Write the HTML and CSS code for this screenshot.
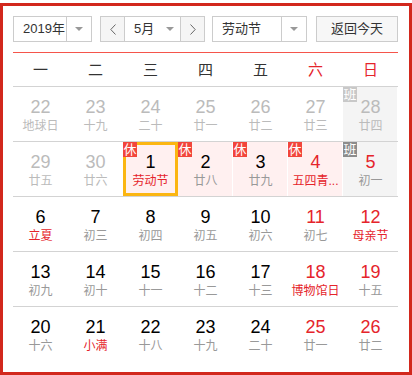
FILE: index.html
```html
<!DOCTYPE html>
<html>
<head>
  <meta charset="UTF-8">
  <title>万年历</title>
  <link rel="stylesheet" href="styles.css">
</head>
<body>
  <div class="calendar">
    <div class="toolbar">
      <div class="select year-select">
        <span class="select-text">2019年</span>
        <span class="select-arrow"></span>
      </div>
      <div class="month-group">
        <span class="nav-btn">
          <svg width="6" height="11" viewBox="0 0 6 11"><path d="M5.5 0.5 L0.8 5.5 L5.5 10.5" fill="none" stroke="#666" stroke-width="1"/></svg>
        </span>
        <div class="month-select">
          <span class="select-text">5月</span>
          <span class="arrow"></span>
        </div>
        <span class="nav-btn">
          <svg width="6" height="11" viewBox="0 0 6 11"><path d="M0.5 0.5 L5.2 5.5 L0.5 10.5" fill="none" stroke="#666" stroke-width="1"/></svg>
        </span>
      </div>
      <div class="select holiday-select">
        <span class="select-text">劳动节</span>
        <span class="select-arrow"></span>
      </div>
      <span class="today-btn">返回今天</span>
    </div>

    <div class="weekdays">
      <span>一</span><span>二</span><span>三</span><span>四</span><span>五</span>
      <span class="weekend">六</span><span class="weekend">日</span>
    </div>

    <div class="week">
      <div class="day other"><b>22</b><i>地球日</i></div>
      <div class="day other"><b>23</b><i>十九</i></div>
      <div class="day other"><b>24</b><i>二十</i></div>
      <div class="day other"><b>25</b><i>廿一</i></div>
      <div class="day other"><b>26</b><i>廿二</i></div>
      <div class="day other"><b>27</b><i>廿三</i></div>
      <div class="day other work"><span class="tag tag-work-light">班</span><b>28</b><i>廿四</i></div>
    </div>
    <div class="week">
      <div class="day other"><b>29</b><i>廿五</i></div>
      <div class="day other"><b>30</b><i>廿六</i></div>
      <div class="day rest selected"><span class="tag">休</span><b>1</b><i class="fest">劳动节</i></div>
      <div class="day rest"><span class="tag">休</span><b>2</b><i>廿八</i></div>
      <div class="day rest"><span class="tag">休</span><b>3</b><i>廿九</i></div>
      <div class="day rest red"><span class="tag">休</span><b>4</b><i class="fest">五四青...</i></div>
      <div class="day work red"><span class="tag tag-work">班</span><b>5</b><i>初一</i></div>
    </div>
    <div class="week">
      <div class="day"><b>6</b><i class="fest">立夏</i></div>
      <div class="day"><b>7</b><i>初三</i></div>
      <div class="day"><b>8</b><i>初四</i></div>
      <div class="day"><b>9</b><i>初五</i></div>
      <div class="day"><b>10</b><i>初六</i></div>
      <div class="day red"><b>11</b><i>初七</i></div>
      <div class="day red"><b>12</b><i class="fest">母亲节</i></div>
    </div>
    <div class="week">
      <div class="day"><b>13</b><i>初九</i></div>
      <div class="day"><b>14</b><i>初十</i></div>
      <div class="day"><b>15</b><i>十一</i></div>
      <div class="day"><b>16</b><i>十二</i></div>
      <div class="day"><b>17</b><i>十三</i></div>
      <div class="day red"><b>18</b><i class="fest">博物馆日</i></div>
      <div class="day red"><b>19</b><i>十五</i></div>
    </div>
    <div class="week">
      <div class="day"><b>20</b><i>十六</i></div>
      <div class="day"><b>21</b><i class="fest">小满</i></div>
      <div class="day"><b>22</b><i>十八</i></div>
      <div class="day"><b>23</b><i>十九</i></div>
      <div class="day"><b>24</b><i>二十</i></div>
      <div class="day red"><b>25</b><i>廿一</i></div>
      <div class="day red"><b>26</b><i>廿二</i></div>
    </div>
  </div>
</body>
</html>
```

FILE: styles.css
```css
body {
  margin: 0;
  padding-top: 3px;
  font-family: "Liberation Sans", "Noto Sans CJK SC", sans-serif;
  color: #333;
}

.calendar {
  width: 412px;
  height: 372px;
  box-sizing: border-box;
  border: 3px solid #d2281d;
  padding: 10px 11px 0 10px;
}

/* 顶部工具栏 */
.toolbar {
  display: flex;
  height: 26px;
  margin-bottom: 10px;
  font-size: 13px;
}

.select {
  display: flex;
  box-sizing: border-box;
  height: 26px;
  border: 1px solid #ccc;
  background: #fff;
}

.select-text {
  flex: 1;
  min-width: 0;
  line-height: 24px;
  padding-left: 9px;
  white-space: nowrap;
}

.select-arrow {
  width: 24px;
  flex: none;
  border-left: 1px solid #ccc;
  position: relative;
}

.select-arrow::after,
.arrow::after {
  content: "";
  position: absolute;
  left: 50%;
  top: 50%;
  margin: -2px 0 0 -4px;
  border-left: 4px solid transparent;
  border-right: 4px solid transparent;
  border-top: 4px solid #999;
}

.year-select {
  width: 79px;
}

.holiday-select {
  width: 95px;
  margin-left: 7px;
}

.month-group {
  display: flex;
  width: 105px;
  height: 26px;
  box-sizing: border-box;
  margin-left: 8px;
  border: 1px solid #ccc;
}

.nav-btn {
  width: 23px;
  display: flex;
  align-items: center;
  justify-content: center;
  background: #f5f5f5;
}

.month-select {
  flex: 1;
  display: flex;
  background: #fff;
  border-left: 1px solid #ccc;
  border-right: 1px solid #ccc;
}

.month-select .arrow {
  width: 20px;
  position: relative;
}

.today-btn {
  width: 82px;
  height: 26px;
  box-sizing: border-box;
  margin-left: 9px;
  border: 1px solid #ccc;
  background: #f7f7f7;
  text-align: center;
  line-height: 24px;
}

/* 星期 */
.weekdays {
  display: grid;
  grid-template-columns: repeat(7, 55px);
  height: 33px;
  border-top: 1px solid #f5554b;
  border-bottom: 1px solid #d3d3d3;
  font-size: 15px;
  line-height: 33px;
  text-align: center;
}

.weekdays .weekend {
  color: #e5242b;
}

/* 日期 */
.week {
  display: grid;
  grid-template-columns: repeat(7, 55px);
  border-bottom: 1px solid #d3d3d3;
}

.week:last-child {
  border-bottom: none;
}

.day {
  position: relative;
  height: 54px;
  box-sizing: border-box;
  padding-top: 9px;
  text-align: center;
  box-shadow: inset -1px 0 #fff;
}

.day b {
  display: block;
  font-weight: normal;
  font-size: 18px;
  line-height: 22px;
  color: #000;
}

.day i {
  display: block;
  font-style: normal;
  font-size: 12px;
  line-height: 16px;
  color: #999;
  white-space: nowrap;
}

.day.red b {
  color: #e5242b;
}

.day i.fest {
  color: #e5242b;
}

.day.other b,
.day.other i {
  color: #bbb;
}

.day.rest {
  background: #fff0f0;
}

.day.work {
  background: #f4f4f4;
}

.day.selected {
  border: 3px solid #fbb612;
  padding-top: 6px;
  box-shadow: none;
}

.tag {
  position: absolute;
  top: 0;
  left: 0;
  width: 14px;
  height: 15px;
  font-size: 13px;
  line-height: 15px;
  text-align: center;
  color: #fff;
  background: #f2453b;
}

.selected .tag {
  top: -3px;
  left: -3px;
}

.tag-work {
  background: #8c8c8c;
}

.tag-work-light {
  background: #c8c8c8;
}
```
